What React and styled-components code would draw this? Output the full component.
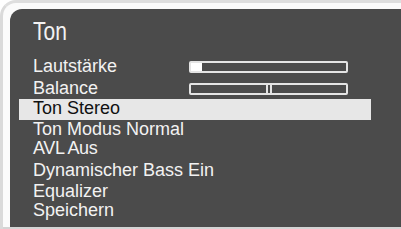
import React from "react";
import styled, { createGlobalStyle } from "styled-components";

const Global = createGlobalStyle`
    html, body {
        margin: 0;
        padding: 0;
        background: #ffffff;
        overflow: hidden;
    }
`

const Frame = styled.div`
    box-sizing: border-box;
    width: 401px;
    height: 229px;
    display: flex;
    flex-direction: column;
    padding: 6px 0 2px 7px;
    border-top: 3px solid #dedede;
    border-left: 3px solid #dadada;
    border-top-left-radius: 16px;
    background: #fbfbfb;
    box-shadow: inset 0 -2px 0 #d4d4d4;
`

const Panel = styled.div`
    flex: 1;
    display: flex;
    flex-direction: column;
    background: #4b4b4b;
    border-top-left-radius: 12px;
    padding: 10px 0 0 9px;
    font-family: "Liberation Sans", Arial, sans-serif;
    color: #f2f2f2;
`

const Titulo = styled.h1`
    margin: 0 0 13px 14px;
    font-size: 25px;
    font-weight: 400;
    line-height: 25px;
    transform: scaleX(0.84);
    transform-origin: left center;
`

const Fila = styled.div`
    display: flex;
    align-items: center;
    width: 352px;
    box-sizing: border-box;
    margin-top: ${p => p.$mt || 0}px;
    padding: 0 0 ${p => (p.$activa ? 3 : 0)}px 14px;
    font-size: 18px;
    line-height: ${p => (p.$activa ? 18 : 19)}px;
    letter-spacing: ${p => (p.$apretado ? "-0.4px" : "normal")};
    background: ${p => (p.$activa ? "#e7e7e7" : "transparent")};
    color: ${p => (p.$activa ? "#111111" : "#f2f2f2")};
    white-space: nowrap;
`

const Etiqueta = styled.span`
    width: 156px;
    flex-shrink: 0;
`

const Barra = styled.div`
    position: relative;
    box-sizing: border-box;
    width: 159px;
    height: 12px;
    border: 2px solid #e4e4e4;
    border-radius: 2px;
`

const Relleno = styled.div`
    width: ${p => p.$ancho}px;
    height: 100%;
    background: #ffffff;
`

const Marca = styled.div`
    position: absolute;
    top: -1px;
    bottom: -1px;
    left: 75px;
    width: 2px;
    border-left: 2px solid #e4e4e4;
    border-right: 2px solid #e4e4e4;
`

const filas = [
    { texto: "Ton Modus Normal", mt: 0 },
    { texto: "AVL Aus", mt: 0, apretado: true },
    { texto: "Dynamischer Bass Ein", mt: 3 },
    { texto: "Equalizer", mt: 2 },
    { texto: "Speichern", mt: 0 },
]

const App = () => {
    return (
        <>
            <Global />
            <Frame>
                <Panel>
                    <Titulo>Ton</Titulo>
                    <Fila>
                        <Etiqueta>Lautstärke</Etiqueta>
                        <Barra><Relleno $ancho={11} /></Barra>
                    </Fila>
                    <Fila $mt={3}>
                        <Etiqueta>Balance</Etiqueta>
                        <Barra><Marca /></Barra>
                    </Fila>
                    <Fila $mt={1} $activa>Ton Stereo</Fila>
                    {filas.map(f => (
                        <Fila key={f.texto} $mt={f.mt} $apretado={f.apretado}>
                            {f.texto}
                        </Fila>
                    ))}
                </Panel>
            </Frame>
        </>
    );
}

export default App;
